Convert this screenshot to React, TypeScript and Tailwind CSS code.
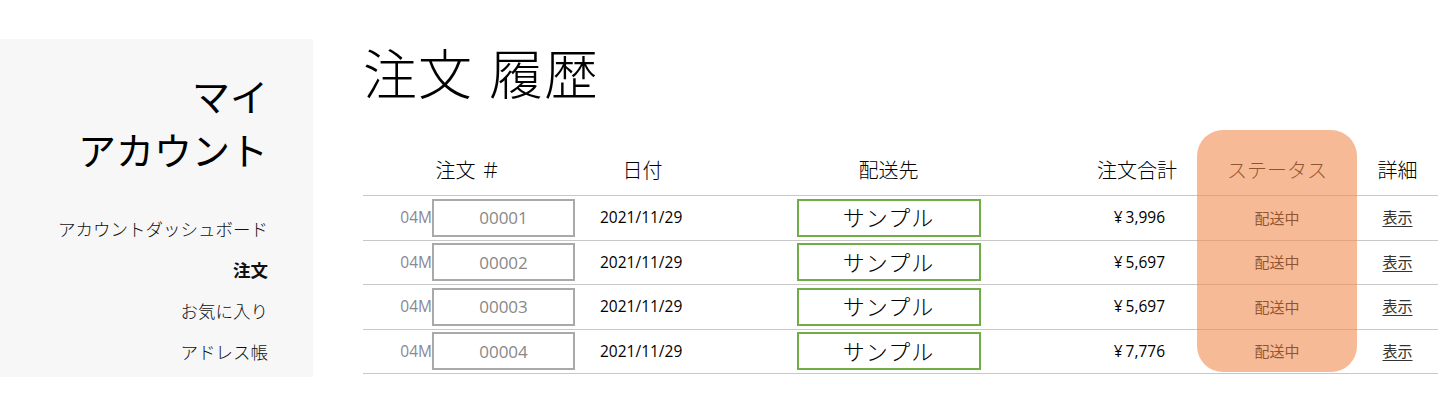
import React from 'react';

interface Order {
  id: string;
  date: string;
  ship: string;
  total: string;
  status: string;
}

const orders: Order[] = [
  { id: '00001', date: '2021/11/29', ship: 'サンプル', total: '3,996', status: '配送中' },
  { id: '00002', date: '2021/11/29', ship: 'サンプル', total: '5,697', status: '配送中' },
  { id: '00003', date: '2021/11/29', ship: 'サンプル', total: '5,697', status: '配送中' },
  { id: '00004', date: '2021/11/29', ship: 'サンプル', total: '7,776', status: '配送中' },
];

const cols = 'grid grid-cols-[222px_115px_377px_120px_160px_81px]';

const Sidebar: React.FC = () => (
  <aside className="mt-[39px] h-[338px] w-[313px] shrink-0 bg-[#f7f7f7] pr-[45px] pt-[30px] text-right">
    <h2 className="text-[38px] leading-[54px] text-black">
      マイ
      <br />
      アカウント
    </h2>
    <nav className="mt-[32px] flex flex-col text-[17.5px] font-light text-[#111]">
      <a className="leading-[41px]">アカウントダッシュボード</a>
      <a className="font-bold leading-[41px]">注文</a>
      <a className="leading-[41px]">お気に入り</a>
      <a className="leading-[41px]">アドレス帳</a>
    </nav>
  </aside>
);

const OrderTable: React.FC = () => (
  <div className="relative mt-[45px] w-[1075px]">
    <div className={`${cols} h-[46px] items-center border-b border-[#c8c8c8] pb-[3px] text-[20px] font-light text-black`}>
      <div className="pr-[12px] text-center">注文 ＃</div>
      <div className="text-center">日付</div>
      <div className="text-center">配送先</div>
      <div className="pr-[20px] text-right">注文合計</div>
      <div className="text-center">ステータス</div>
      <div className="text-center">詳細</div>
    </div>
    {orders.map((o) => (
      <div key={o.id} className={`${cols} h-[44.5px] items-center border-b border-[#c8c8c8] text-[15.5px]`}>
        <div className="flex items-center justify-end pr-[10px]">
          <span className="text-[#8a8796]">04M</span>
          <span className="flex h-[38px] w-[143px] items-center justify-center border-2 border-[#a9a9a9] text-[17px] text-[#888]">
            {o.id}
          </span>
        </div>
        <div className="pl-[15px] text-black">{o.date}</div>
        <div className="flex justify-center">
          <span className="flex h-[38px] w-[184px] items-center justify-center border-2 border-[#70ad47] text-[22px] font-light tracking-[1px] text-black">
            {o.ship}
          </span>
        </div>
        <div className="pr-[32px] text-right text-black">
          ¥<span className="ml-[3px]">{o.total}</span>
        </div>
        <div className="text-center text-[15px] text-black">{o.status}</div>
        <div className="text-center">
          <a className="text-[15px] text-[#333] underline underline-offset-[3px]">表示</a>
        </div>
      </div>
    ))}
    <div className="pointer-events-none absolute left-[834px] top-[-20px] h-[242px] w-[160px] rounded-[26px] bg-[rgba(240,140,80,0.6)]" />
  </div>
);

export default function App() {
  return (
    <div
      className="flex h-[412px] w-[1456px] items-start bg-white"
      style={{ fontFamily: '"Open Sans", "Noto Sans CJK JP", sans-serif' }}
    >
      <Sidebar />
      <main className="ml-[50px] pt-[43px]">
        <h1 className="text-[54px] font-light leading-[62px] tracking-[1px] text-black">
          注文<span className="ml-[16px]">履歴</span>
        </h1>
        <OrderTable />
      </main>
    </div>
  );
}
